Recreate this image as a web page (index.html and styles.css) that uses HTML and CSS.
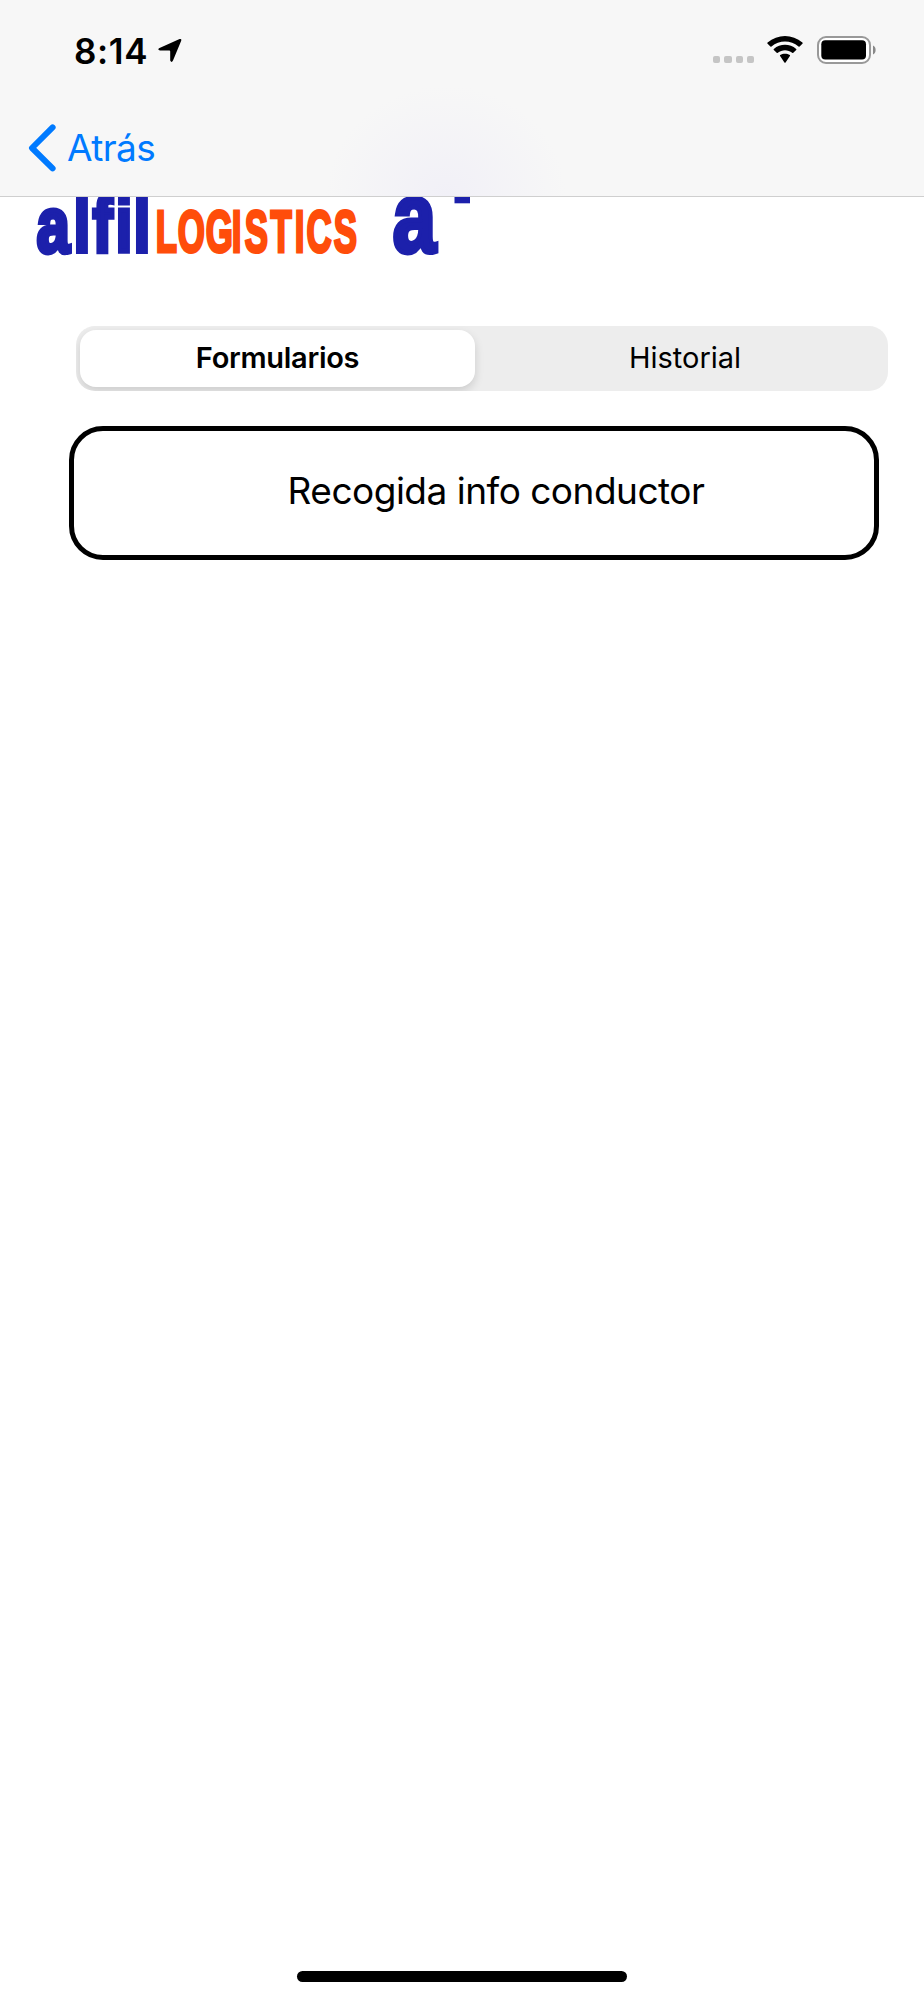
FILE: index.html
```html
<!DOCTYPE html>
<html lang="es">
<head>
    <meta charset="UTF-8">
    <title>Formularios</title>
    <link rel="stylesheet" href="styles.css">
</head>
<body>
<div id="screen">
    <header class="navbar">
        <div class="status">
            <div class="status-left">
                <span class="time">8:14</span>
                <svg class="location" width="26" height="26" viewBox="0 0 26 26">
                    <path d="M2 10.3 22.6 1.1Q25 .3 24.2 2.8L16 22.6Q14.6 25.2 13.2 22.6V13.4Q13.2 12.6 12.4 12.6H3Q.2 11.8 2 10.3Z"/>
                </svg>
            </div>
            <div class="status-right">
                <ul class="signal">
                    <li></li>
                    <li></li>
                    <li></li>
                    <li></li>
                </ul>
                <svg class="wifi" width="36" height="28" viewBox="0 0 36 28">
                    <path d="M.6 7.7Q0 7.2.6 6.6C10.5-2.2 25.5-2.2 35.4 6.6Q36 7.2 35.4 7.7L32.6 10.5Q32.1 11 31.5 10.5C23.8 3.8 12.2 3.8 4.5 10.5Q3.9 11 3.4 10.5Z"/>
                    <path d="M6.8 13.9Q6.3 13.4 6.8 12.9C13.2 7.4 22.8 7.4 29.2 12.9Q29.7 13.4 29.2 13.9L26.3 16.7Q25.8 17.2 25.2 16.7C21.1 13.3 14.9 13.3 10.8 16.7Q10.2 17.2 9.7 16.7Z"/>
                    <path d="M13.1 20.1Q12.6 19.6 13.2 19.1C16 17.2 20 17.2 22.8 19.1Q23.4 19.6 22.9 20.1L18.6 26.4Q18 27 17.4 26.4Z"/>
                </svg>
                <svg class="battery" width="60" height="28" viewBox="0 0 60 28">
                    <rect x="1" y="1" width="52" height="26" rx="8" fill="#fff" stroke="#999" stroke-width="2"/>
                    <rect x="4.3" y="4.3" width="44.7" height="19.2" rx="4"/>
                    <path d="M56 9.5C59.5 11 59.5 17 56 18.5Z" fill="#888"/>
                </svg>
            </div>
        </div>
        <a class="back" href="#">
            <svg width="28" height="48" viewBox="0 0 28 48">
                <path d="M24.6 3.4 4 24 24.6 44.4" fill="none" stroke="#007aff" stroke-width="6" stroke-linecap="round" stroke-linejoin="round"/>
            </svg>
            <span>Atrás</span>
        </a>
    </header>

    <main>
        <svg class="logo" width="480" height="64" viewBox="0 197 480 64">
            <text class="blue" transform="translate(.8) scale(.76 1)" x="47.2 96 121 151.2 175" y="251.7" font-size="78">alfil</text>
            <text class="orange" transform="translate(1.2) scale(.58 1)" x="266.5 304.4 352.6 397.5 419.9 464.2 506.1 526.6 573.3" y="252.2" font-size="60">LOGISTICS</text>
            <text class="blue" transform="translate(.8) scale(.77 1)" x="508.9" y="251.7" font-size="101">a</text>
            <rect x="454.5" y="190" width="15.5" height="13.3" fill="#1c20ab"/>
        </svg>

        <div class="tabs">
            <div class="tab on">Formularios</div>
            <div class="tab">Historial</div>
        </div>

        <div class="card">Recogida info conductor</div>
    </main>

    <div class="home"></div>
</div>
</body>
</html>
```
FILE: styles.css
```css
*{
    margin:0;
    padding:0;
    box-sizing: border-box;
}
body{
    background-color: #fff;
    color: #000;
    font-family: Inter, "Liberation Sans", sans-serif;
}
#screen{
    width: 924px;
    height: 2000px;
    display: flex;
    flex-direction: column;
    overflow: hidden;
}
/* status bar + back button */
.navbar{
    height: 197px;
    border-bottom: solid 1px #cfcfcf;
    background: radial-gradient(ellipse 120px 110px at 446px 100%, #f1f0f7, #f7f7f7);
}
.status{
    height: 100px;
    padding: 0 47px 0 74px;
    display: flex;
    justify-content: space-between;
}
.status-left{
    display: flex;
    padding-top: 30px;
}
.time{
    width: 83px;
    font-size: 35px;
    line-height: 42px;
    font-weight: 600;
    letter-spacing: 0.6px;
}
.location{
    margin-top: 8px;
}
.status-right{
    display: flex;
    padding-top: 36px;
}
.signal{
    display: flex;
    gap: 4px;
    list-style: none;
    padding-top: 20px;
    margin-right: 13px;
}
.signal li{
    width: 7.2px;
    height: 7.2px;
    border-radius: 2px;
    background-color: #c5c5c5;
}
.wifi{
    margin-right: 14px;
}
.back{
    display: flex;
    padding: 24px 0 0 28px;
    color: #007aff;
    text-decoration: none;
}
.back span{
    margin-left: 11px;
    font-size: 37px;
    line-height: 48px;
    letter-spacing: -0.6px;
}
main{
    flex: 1;
}
.logo{
    display: block;
    overflow: hidden;
    font-family: "Liberation Sans", sans-serif;
    font-weight: bold;
}
.blue{
    fill: #1c20ab;
    stroke: #1c20ab;
    stroke-width: 5px;
}
.orange{
    fill: #ff4d0a;
    stroke: #ff4d0a;
    stroke-width: 3.2px;
}
.tabs{
    display: flex;
    width: 812px;
    height: 65px;
    margin: 65px 0 0 76px;
    padding: 4px;
    border-radius: 19px;
    background-color: #ededed;
    overflow: hidden;
}
.tab{
    flex: 1;
    padding-left: 11px;
    font-size: 29px;
    line-height: 56px;
    text-align: center;
}
.tab.on{
    flex: 0 0 395px;
    height: 57px;
    padding-left: 0;
    border-radius: 16px;
    background-color: #fff;
    box-shadow: 0 4px 10px rgba(0,0,0,.14);
    font-weight: 600;
    letter-spacing: -0.3px;
}
.card{
    width: 810px;
    height: 134px;
    margin: 35px 0 0 69px;
    padding-left: 44px;
    border: solid 5px #000;
    border-radius: 34px;
    font-size: 37px;
    line-height: 119px;
    letter-spacing: -0.5px;
    text-align: center;
}
.home{
    width: 330px;
    height: 11px;
    margin: 0 auto 18px;
    border-radius: 6px;
    background-color: #000;
}
```
